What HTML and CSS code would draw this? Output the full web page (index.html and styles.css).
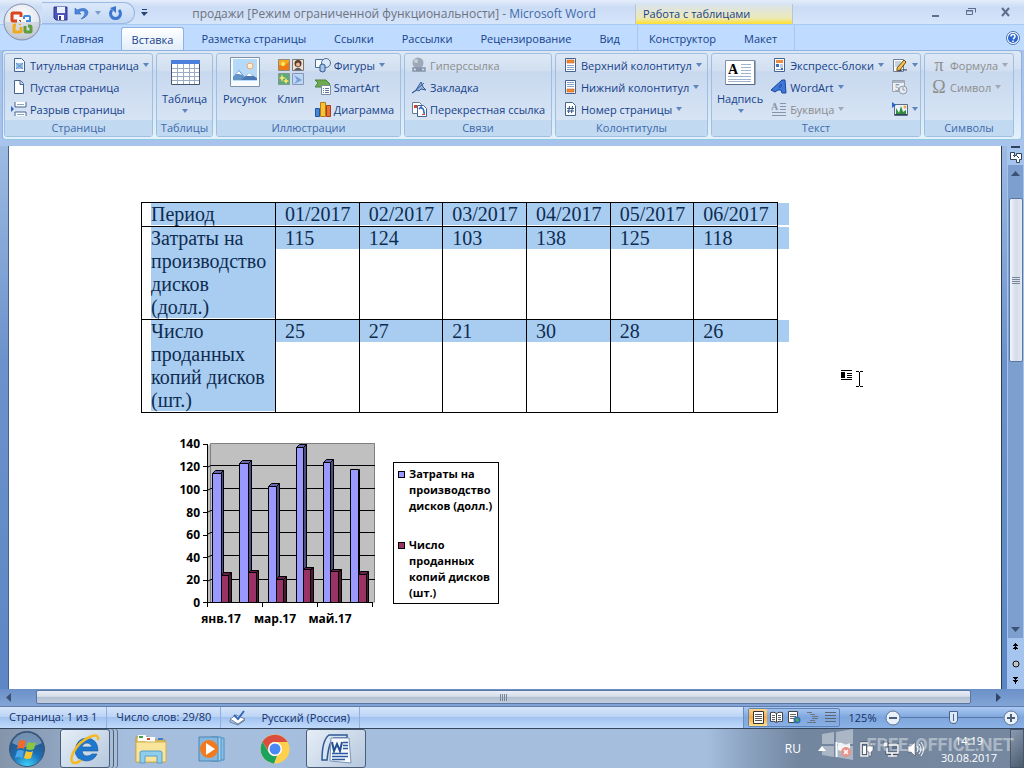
FILE: index.html
```html
<!DOCTYPE html>
<html lang="ru">
<head>
    <meta charset="UTF-8">
    <meta name="viewport" content="width=device-width, initial-scale=1.0">
    <title>продажи - Microsoft Word</title>
    <link rel="stylesheet" href="styles.css">
</head>
<body>
    <header class="titlebar">
        <button class="office" aria-label="Office">
            <svg width="38" height="38" viewBox="0 0 38 38">
                <defs>
                    <radialGradient id="orb" cx=".5" cy=".35" r=".65">
                        <stop offset="0" stop-color="#fff"/>
                        <stop offset=".7" stop-color="#e3e8f0"/>
                        <stop offset="1" stop-color="#b4bccb"/>
                    </radialGradient>
                </defs>
                <circle cx="19" cy="19" r="18" fill="url(#orb)" stroke="#7f8fa8"/>
                <path d="M2 19a17 17 0 0 0 34 0z" fill="#c3cad6" opacity=".6"/>
                <g fill="none">
                    <path d="M14 18H10q-1 0-1-1v-6q0-1 1-1h7q1 0 1 1v3" stroke="#d8471c" stroke-width="3"/>
                    <path d="M17 18v-1M18 18h-1" stroke="#d8471c" stroke-width="2"/>
                    <path d="M21 16v-2q0-1 1-1h4q1 0 1 1v4h-4" stroke="#3b8de0" stroke-width="2"/>
                    <path d="M13 22h-1q-1 0-1 1v5q0 1 1 1h5q1 0 1-1v-4" stroke="#f2a91c" stroke-width="3"/>
                    <path d="M17 22v-1" stroke="#f2a91c" stroke-width="2"/>
                    <path d="M22 23v5q0 1 1 1h4q1 0 1-1v-4q0-1-1-1h-2" stroke="#5f9c3c" stroke-width="3"/>
                </g>
            </svg>
        </button>
        <div class="quick">
            <button aria-label="Сохранить"><svg width="15" height="15" viewBox="0 0 15 15"><path d="M1 1h13v13H3l-2-2z" fill="#4f55b8" stroke="#31378e"/><path d="M4 1h8v6H4z" fill="#e8f0fb"/><path d="M5 9h6v5H5z" fill="#fff"/><path d="M6 10h2v4H6z" fill="#31378e"/></svg></button>
            <button aria-label="Отменить"><svg width="15" height="15" viewBox="0 0 15 15"><path d="M1 2v6h6l-2-2q5-3 6 1 0 3-4 6 7-2 7-7-2-6-11-2z" fill="#4a86dd" stroke="#2f62b5" stroke-width=".6"/></svg></button>
            <button aria-label="Список отмены"><svg width="7" height="4"><path d="M0 0h6L3 4z" fill="#7a9ccb"/></svg></button>
            <button aria-label="Повторить"><svg width="15" height="15" viewBox="0 0 15 15"><path d="M4 4a5 5 0 1 0 7 0" fill="none" stroke="#3d76d0" stroke-width="3"/><path d="M8 0v7L2 2z" fill="#3d76d0"/></svg></button>
        </div>
        <button class="quick-more" aria-label="Настройка панели"><svg width="7" height="7"><path d="M1 0h5v1H1zM0 3h7L3 7z" fill="#24427a"/></svg></button>
        <h1>продажи [Режим ограниченной функциональности] - <span>Microsoft Word</span></h1>
        <div class="context">Работа с таблицами</div>
        <div class="window">
            <button aria-label="Свернуть"><svg width="12" height="12"><path d="M2 9h7v2H2z" fill="#5d6f8e"/></svg></button>
            <button aria-label="Восстановить"><svg width="12" height="12"><path d="M3.500 2.500h7v4M1.500 5h6v3.500h-6z" fill="none" stroke="#5d6f8e"/><path d="M1 4h7v1H1zM3 2h8v1H3z" fill="#5d6f8e"/></svg></button>
            <button aria-label="Закрыть"><svg width="12" height="12"><path d="M2 2l7 8M9 2l-7 8" stroke="#5d6f8e" stroke-width="2"/></svg></button>
        </div>
    </header>

    <nav class="tabs">
        <a href="#">Главная</a>
        <a href="#" class="active">Вставка</a>
        <a href="#">Разметка страницы</a>
        <a href="#">Ссылки</a>
        <a href="#">Рассылки</a>
        <a href="#">Рецензирование</a>
        <a href="#">Вид</a>
        <span class="context-tabs">
            <a href="#">Конструктор</a>
            <a href="#">Макет</a>
        </span>
        <button class="help" aria-label="Справка"><svg width="14" height="14" viewBox="0 0 14 14"><circle cx="7" cy="7" r="6.500" fill="#fff" stroke="#4a6fae"/><circle cx="7" cy="7" r="5" fill="#2b67d0"/><path d="M5 5.500q0-2 2-2t2 2q0 1-2 2.500M7 9.500v1.500" stroke="#fff" stroke-width="1.600" fill="none"/></svg></button>
    </nav>

    <div class="ribbon">
        <section class="group pages">
            <div class="tools">
                <div class="stack">
                    <button><svg class="icon" viewBox="0 0 16 16"><path d="M3.500 1.500h7l3 3v10h-10z" fill="#f4f8fd" stroke="#42648f"/><path d="M5 6h7v6H5z" fill="#9cbfe6"/><path d="M5 6l7 6M12 6l-7 6" stroke="#5d8fc8"/></svg>Титульная страница<i class="arrow"></i></button>
                    <button><svg class="icon" viewBox="0 0 16 16"><path d="M3.500 1.500h6l3 3v10h-9z" fill="#fff" stroke="#42648f"/><path d="M9 1.500v4h4" fill="#c6d6ea" stroke="#42648f"/></svg>Пустая страница</button>
                    <button><svg class="icon" viewBox="0 0 16 16"><path d="M4 1v5h11V1M4 15v-4h11v4" fill="#fff" stroke="#42648f"/><path d="M6 3.500h7M6 13.500h7" stroke="#8aa5c6"/><path d="M0 5l3 3-3 3z" fill="#2a65c8"/></svg>Разрыв страницы</button>
                </div>
            </div>
            <h2>Страницы</h2>
        </section>

        <section class="group tables">
            <div class="tools">
                <button class="big"><svg width="32" height="32" viewBox="0 0 32 32"><path d="M2.500 4.500h28v24h-28z" fill="#fff" stroke="#45546d"/><path d="M2 4h29v4H2z" fill="#4a80dc"/><path d="M3 12.500h27M3 16.500h27M3 20.500h27M3 24.500h27M8.500 8v20M14.500 8v20M20.500 8v20M25.500 8v20" stroke="#9aabc4"/></svg>Таблица<i class="arrow"></i></button>
            </div>
            <h2>Таблицы</h2>
        </section>

        <section class="group pics">
            <div class="tools">
                <button class="big"><svg width="32" height="32" viewBox="0 0 32 32"><path d="M1.500 1.500h29v29h-29z" fill="#f8fbfd" stroke="#7d92a8"/><path d="M4 3h24v22H4z" fill="#b5d9f8"/><circle cx="21" cy="10" r="3" fill="#fff0d8" stroke="#f0a468"/><path d="M4 24v-3l6-7 5 6 3 4z" fill="#6293c6"/><path d="M12 24l8-7 8 5v2z" fill="#4978b4"/><path d="M7 18l3-3 3 4-3-1zM17 20l3-3 4 3z" fill="#fff"/></svg>Рисунок</button>
                <button class="big"><svg width="32" height="32" viewBox="0 0 32 32"><path d="M3.500 3.500h11v11h-11z" fill="#f9a91e" stroke="#8c8a82"/><path d="M4 9l5 1 5-4v8H4z" fill="#ee7a12"/><circle cx="8" cy="8" r="2" fill="#ffe96c"/><path d="M17.500 3.500h11v11h-11z" fill="#eee2d4" stroke="#777"/><circle cx="23" cy="7.500" r="3.500" fill="#563b2d"/><circle cx="23" cy="8.500" r="2" fill="#efb58d"/><path d="M19 14q4-5 8 0z" fill="#5d5d65"/><path d="M3.500 17.500h11v11h-11z" fill="#5eaa7c" stroke="#7d9c88"/><path d="M7 18l1 3 3 1-3 1-1 3-1-3-2-1 2-1zM11 22l1 2 2 1-2 1-1 2-1-2-2-1 2-1z" fill="#fbe568"/><path d="M17.500 17.500h11v11h-11z" fill="#bcd6f4" stroke="#8798b4"/><path d="M19 19l8 5-8 4 3-4z" fill="#769edb"/></svg>Клип</button>
                <div class="stack">
                    <button><svg class="icon" viewBox="0 0 16 16"><path d="M.500 2.500h8v8h-8z" fill="#f7fafe" stroke="#4b6d9c"/><circle cx="11" cy="6" r="4.500" fill="#dce9f8" stroke="#4b6d9c"/><path d="M5 8v6q3 2 5 0V8q-2-2-5 0z" fill="#a5c5eb" stroke="#355b90"/></svg>Фигуры<i class="arrow"></i></button>
                    <button><svg class="icon" viewBox="0 0 16 16"><path d="M0 1h11l4 4-3 3H0l3-4z" fill="#6eaa4e" stroke="#4b8538"/><path d="M6.500 6.500h9v9h-9z" fill="#fff" stroke="#7b8ca2"/><path d="M8 9.500h1M10 9.500h4M8 11.500h1M10 11.500h4M8 13.500h1M10 13.500h4" stroke="#5e789c"/></svg>SmartArt</button>
                    <button><svg class="icon" viewBox="0 0 16 16"><path d="M.500 7.500h4v8h-4z" fill="#4587d9" stroke="#1f569c"/><path d="M5.500 1.500h5v14h-5z" fill="#f9c433" stroke="#b8791a"/><path d="M11.500 4.500h4v11h-4z" fill="#e97332" stroke="#a5401d"/></svg>Диаграмма</button>
                </div>
            </div>
            <h2>Иллюстрации</h2>
        </section>

        <section class="group links">
            <div class="tools">
                <div class="stack">
                    <button disabled><svg class="icon" viewBox="0 0 16 16"><circle cx="7" cy="6" r="5.500" fill="#9da8b8"/><circle cx="5" cy="4" r="2" fill="#c7d0db"/><path d="M2 11h5v3H2zM8 11h6v3H8zM5 12.500h6" fill="none" stroke="#8793a6" stroke-width="1.500"/></svg>Гиперссылка</button>
                    <button><svg class="icon" viewBox="0 0 16 16"><path d="M1 14l4-3 5-8 2 5 3 3-5-1-2 2-2-1z" fill="#9bb6df" stroke="#365b98"/><path d="M5 11L13 4" stroke="#365b98"/></svg>Закладка</button>
                    <button><svg class="icon" viewBox="0 0 16 16"><path d="M1.500 1.500h7l2 2v9h-9z" fill="#fff" stroke="#6a7890"/><path d="M3 4h3v3H3z" fill="#d8452c"/><path d="M6.500 4.500h6l3 3v8h-9z" fill="#fff" stroke="#42648f"/><path d="M8 8l2-2v1q3 0 3 5h1" fill="none" stroke="#2d62bd" stroke-width="1.500"/><path d="M11 13h3v1h-3z" fill="#d8452c"/></svg>Перекрестная ссылка</button>
                </div>
            </div>
            <h2>Связи</h2>
        </section>

        <section class="group heads">
            <div class="tools">
                <div class="stack">
                    <button><svg class="icon" viewBox="0 0 16 16"><path d="M3.500 1.500h10v13h-10z" fill="#fff" stroke="#42648f"/><path d="M5 3h7v3H5z" fill="#f08a3c" stroke="#c25c18" stroke-width=".6"/><path d="M5 8.500h7M5 10.500h7M5 12.500h7" stroke="#88a4cb"/></svg>Верхний колонтитул<i class="arrow"></i></button>
                    <button><svg class="icon" viewBox="0 0 16 16"><path d="M3.500 1.500h10v13h-10z" fill="#fff" stroke="#42648f"/><path d="M5 10h7v3H5z" fill="#f08a3c" stroke="#c25c18" stroke-width=".6"/><path d="M5 3.500h7M5 5.500h7M5 7.500h7" stroke="#88a4cb"/></svg>Нижний колонтитул<i class="arrow"></i></button>
                    <button><svg class="icon" viewBox="0 0 16 16"><path d="M3.500 1.500h7l3 3v10h-10z" fill="#fff" stroke="#42648f"/><path d="M7.500 5l-1 7M10.500 5l-1 7M5 7.500h7M5 10h7" stroke="#32527f"/></svg>Номер страницы<i class="arrow"></i></button>
                </div>
            </div>
            <h2>Колонтитулы</h2>
        </section>

        <section class="group text">
            <div class="tools">
                <button class="big"><svg width="32" height="32" viewBox="0 0 32 32"><path d="M1.500 4.500h29v24h-29z" fill="#fff" stroke="#8292a8"/><path d="M2 28.500h29v-24" fill="none" stroke="#596b84"/><text x="4" y="18" class="letter">A</text><path d="M17 8.500h10M17 11.500h10M17 14.500h10M17 17.500h10M4 20.500h23M4 23.500h23M4 25.500h23" stroke="#9db5d3"/></svg>Надпись<i class="arrow"></i></button>
                <div class="stack">
                    <button><svg class="icon" viewBox="0 0 16 16"><path d="M3.500 1.500h10v13h-10z" fill="#fff" stroke="#42648f"/><path d="M5 3h7v3H5z" fill="#f08a3c"/><path d="M5 7h3v3H5z" fill="#3a70c0"/><path d="M9 8h3M9 10h3M5 12.500h5" stroke="#7c99c2"/><path d="M10 11h2v2h-2z" fill="#3a70c0"/></svg>Экспресс-блоки<i class="arrow"></i></button>
                    <button><svg class="icon" viewBox="0 0 16 16"><path d="M0 11L11 1h3l1 13h-4l-1-3H7l-3 2zM8 8h2V5z" fill="#3d78da" fill-rule="evenodd" stroke="#1c479c"/></svg>WordArt<i class="arrow"></i></button>
                    <button disabled><svg class="icon" viewBox="0 0 16 16"><text x="0" y="9" class="dropcap">A</text><path d="M9 2.500h6M9 5.500h6M9 8.500h6M1 11.500h14M1 14.500h14" stroke="#8994a6"/></svg>Буквица<i class="arrow"></i></button>
                </div>
                <div class="stack">
                    <button aria-label="Строка подписи"><svg class="icon" viewBox="0 0 16 16"><path d="M1.500 2.500h10v12h-10z" fill="#fff" stroke="#6f7f96"/><path d="M3 5h6M3 7h6M3 9h4" stroke="#8fa6c4"/><path d="M5 11l7-8 2 2-6 8-3 1z" fill="#f4c248" stroke="#6c4a1a"/><path d="M7 14q3-2 8-1" stroke="#253e66" fill="none"/></svg><i class="arrow"></i></button>
                    <button disabled aria-label="Дата и время"><svg class="icon" viewBox="0 0 16 16"><path d="M.500 1.500h12v11H.5z" fill="#edf0f4" stroke="#9aa5b5"/><path d="M1 2h11v2H1z" fill="#aab4c2"/><text x="3" y="12" class="day">5</text><circle cx="11" cy="11" r="4" fill="#e6eaf0" stroke="#8f9bad"/><path d="M11 8v3h2" stroke="#8f9bad" fill="none"/></svg></button>
                    <button aria-label="Объект"><svg class="icon" viewBox="0 0 16 16"><path d="M2.500 3.500h13v11h-13z" fill="#eaf1f8" stroke="#5a6b86"/><path d="M0 1l4 3-4 3z" fill="#2a65c8"/><path d="M4 7l3 5 2-7 2 6 3-2v5H4z" fill="#2f8c3c"/><circle cx="13" cy="6" r="1.500" fill="#f0a63c"/><path d="M3 13h12v1H3z" fill="#31415b"/></svg><i class="arrow"></i></button>
                </div>
            </div>
            <h2>Текст</h2>
        </section>

        <section class="group symbols">
            <div class="tools">
                <div class="stack">
                    <button disabled><span class="icon glyph">π</span>Формула<i class="arrow"></i></button>
                    <button disabled><span class="icon glyph">Ω</span>Символ<i class="arrow"></i></button>
                </div>
            </div>
            <h2>Символы</h2>
        </section>
    </div>

    <main class="workspace">
        <article class="sheet">
            <table>
                <tr>
                    <th scope="row"><p>Период</p></th>
                    <td><p>01/2017</p></td>
                    <td><p>02/2017</p></td>
                    <td><p>03/2017</p></td>
                    <td><p>04/2017</p></td>
                    <td><p>05/2017</p></td>
                    <td><p>06/2017</p></td>
                </tr>
                <tr>
                    <th scope="row"><p>Затраты на производство дисков (долл.)</p></th>
                    <td><p>115</p></td>
                    <td><p>124</p></td>
                    <td><p>103</p></td>
                    <td><p>138</p></td>
                    <td><p>125</p></td>
                    <td><p>118</p></td>
                </tr>
                <tr>
                    <th scope="row"><p>Число проданных копий дисков (шт.)</p></th>
                    <td><p>25</p></td>
                    <td><p>27</p></td>
                    <td><p>21</p></td>
                    <td><p>30</p></td>
                    <td><p>28</p></td>
                    <td><p>26</p></td>
                </tr>
            </table>

            <div class="chart">
                <svg width="215" height="200" viewBox="170 430 215 200">
                    <path d="M208 446l3-3h164v160H208z" fill="#c0c0c0"/>
                    <path d="M210.500 602v-158.500h164v158.500" fill="none" stroke="#808080"/>
                    <path d="M208 467l3-1.500h164M208 490l3-1.500h164M208 512l3-1.500h164M208 534l3-1.500h164M208 557l3-1.500h164M208 581l3-1.500h164" fill="none" stroke="#000"/>
                    <g stroke="#000">
                        <g fill="#4d4d80">
                            <path d="M220.500 473.500l3-3v132h-3zM248.500 463.500l3-3v142h-3zM276.500 486.500l3-3v119h-3zM303.500 447.500l3-3v158h-3zM330.500 462.500l3-3v143h-3zM358.500 470.500l1-1v133h-1z"/>
                        </g>
                        <g fill="#6666b3">
                            <path d="M212.500 473.500l3-3h8l-3 3zM239.500 463.500l3-3h9l-3 3zM268.500 486.500l3-3h8l-3 3zM296.500 447.500l3-3h7l-3 3zM323.500 462.500l3-3h7l-3 3z"/>
                        </g>
                        <path d="M212.500 602.500v-129h9v129zM239.500 602.500v-139h9v139zM268.500 602.500v-116h8v116zM296.500 602.500v-155h7v155zM323.500 602.500v-140h7v140zM350.500 602.500v-133h8v133z" fill="#9999ff"/>
                        <path d="M228.500 575.500l3-3v30h-3zM256.500 572.500l2-2v32h-2zM283.500 579.500l3-3v26h-3zM310.500 569.500l3-2v35h-3zM338.500 571.500l3-2v33h-3zM366.500 574.500l2-3v31h-2z" fill="#4d1a33"/>
                        <path d="M221.500 575.500l2-3h8l-3 3zM248.500 572.500l2-2h8l-2 2zM276.500 579.500l2-3h8l-3 3zM303.500 569.500l2-2h8l-3 2zM330.500 571.500l2-2h9l-3 2zM358.500 574.500l2-3h8l-2 3z" fill="#66224c"/>
                        <path d="M221.500 602.500v-27h7v27zM248.500 602.500v-30h8v30zM276.500 602.500v-23h7v23zM303.500 602.500v-33h7v33zM330.500 602.500v-31h8v31zM358.500 602.500v-28h8v28z" fill="#993366"/>
                    </g>
                    <path d="M207.500 444v159M203 444.500h4M203 466.500h4M203 490.500h4M203 512.500h4M203 535.500h4M203 557.500h4M203 580.500h4M203 602.500h170M207.500 603v4M262.500 603v4M317.500 603v4M372.500 603v4" fill="none" stroke="#000"/>
                    <g class="axis-y">
                        <text x="200" y="448">140</text>
                        <text x="200" y="471">120</text>
                        <text x="200" y="494">100</text>
                        <text x="200" y="517">80</text>
                        <text x="200" y="539">60</text>
                        <text x="200" y="562">40</text>
                        <text x="200" y="584">20</text>
                        <text x="200" y="607">0</text>
                    </g>
                    <g class="axis-x">
                        <text x="221" y="623">янв.17</text>
                        <text x="275" y="623">мар.17</text>
                        <text x="330" y="623">май.17</text>
                    </g>
                </svg>
                <ul class="legend">
                    <li class="costs">Затраты на производство дисков (долл.)</li>
                    <li class="sold">Число проданных копий дисков (шт.)</li>
                </ul>
            </div>

            <svg class="cursor" width="24" height="18" viewBox="0 0 24 18"><path d="M1 .5h11M7 3.500h5M7 5.500h5M7 7.500h5M1 9.500h11M16 1.500h3M20 1.500h3M16 16.500h3M20 16.500h3M19.500 2v14" stroke="#000"/><path d="M1 2h4v6H1z"/></svg>
        </article>

        <div class="vscroll">
            <button class="split" aria-label="Разделить"></button>
            <button class="ruler" aria-label="Линейка"><svg width="12" height="12" viewBox="0 0 12 12"><path d="M.500 1.500h4v3h2v-2h5v6h-2v3h-3v-3h-6z" fill="#fff" stroke="#33425c"/><path d="M3 4l2 2M7 5l2 2" stroke="#33425c"/></svg></button>
            <div class="track">
                <button aria-label="Вверх"><svg width="9" height="5"><path d="M0 5h9L4.500 0z" fill="#3c5273"/></svg></button>
                <div class="thumb"></div>
                <button aria-label="Вниз"><svg width="9" height="5"><path d="M0 0h9L4.500 5z" fill="#3c5273"/></svg></button>
            </div>
            <button class="jump" aria-label="Предыдущая"><svg width="5" height="7"><path d="M2 0h1v1h1v1h1v1H3v1h1v1h1v1H3v1H2V6H0V5h1V4h1V3H0V2h1V1h1z"/></svg></button>
            <button class="jump" aria-label="Объект перехода"><svg width="8" height="8"><circle cx="4" cy="4" r="3" fill="#c5c5c5" stroke="#111"/></svg></button>
            <button class="jump" aria-label="Следующая"><svg width="5" height="7"><path d="M0 0h5v1H4v1H3v1h2v1H4v1H3v2H2V5H1V4H0V3h2V2H1V1H0z"/></svg></button>
        </div>
    </main>

    <div class="hscroll">
        <button aria-label="Влево"><svg width="5" height="9"><path d="M5 0v9L0 4.500z" fill="#3c5273"/></svg></button>
        <div class="thumb"></div>
        <button aria-label="Вправо"><svg width="5" height="9"><path d="M0 0v9l5-4.500z" fill="#2f4468"/></svg></button>
    </div>

    <footer class="status">
        <span>Страница: 1 из 1</span>
        <span>Число слов: 29/80</span>
        <span class="lang"><svg width="17" height="16" viewBox="0 0 17 16"><path d="M1 9l6-4 9 4-7 5z" fill="#fff" stroke="#6c7f9c"/><path d="M1 10v2l8 3 7-5" fill="none" stroke="#6c7f9c"/><path d="M5 5l4 4 6-8" fill="none" stroke="#3267bf" stroke-width="2"/></svg>Русский (Россия)</span>
        <div class="tray-right">
            <div class="views">
                <button class="on" aria-label="Разметка"><svg width="13" height="13"><path d="M1.500.5h10v12h-10z" fill="#fff" stroke="#333"/><path d="M3 3.500h7M3 5.500h7M3 7.500h7M3 9.500h7" stroke="#555"/></svg></button>
                <button aria-label="Чтение"><svg width="13" height="13"><path d="M.500 1.500q4-1 6 1 2-2 6-1v9q-4-1-6 1-2-2-6-1zM6.500 2v9" fill="#fff" stroke="#444"/><path d="M2 4.500h3M2 6.500h3M2 8.500h3M8 4.500h3M8 6.500h3M8 8.500h3" stroke="#666"/></svg></button>
                <button aria-label="Веб"><svg width="13" height="13"><path d="M.500.5h9v11h-9z" fill="#fff" stroke="#444"/><path d="M2 3.500h6M2 5.500h6M2 7.500h4" stroke="#666"/><circle cx="9" cy="9" r="3.500" fill="#2e6fb7"/><path d="M7 8l3-1 1 3-2 1z" fill="#55a548"/></svg></button>
                <button aria-label="Структура"><svg width="13" height="13"><path d="M1 1.500h5M4 3.500h5M6 5.500h6M6 7.500h6M4 9.500h5M1 11.500h9" stroke="#6b7480"/></svg></button>
                <button aria-label="Черновик"><svg width="13" height="13"><path d="M1 1.500h11M1 4.500h11M1 7.500h11M1 10.500h11" stroke="#5d6671"/></svg></button>
            </div>
            <span class="percent">125%</span>
            <button class="round" aria-label="Мельче"><svg width="16" height="16"><circle cx="8" cy="8" r="7" fill="#e8f0fa" stroke="#5c7596"/><path d="M4 7h8v2H4z" fill="#4b5f7d"/></svg></button>
            <input type="range" min="0" max="100" value="52" aria-label="Масштаб">
            <button class="round" aria-label="Крупнее"><svg width="16" height="16"><circle cx="8" cy="8" r="7" fill="#e8f0fa" stroke="#5c7596"/><path d="M4 7h3V4h2v3h3v2H9v3H7V9H4z" fill="#4b5f7d"/></svg></button>
        </div>
    </footer>

    <div class="taskbar">
        <button class="start" aria-label="Пуск"><svg width="38" height="38" viewBox="0 0 38 38">
            <defs>
                <radialGradient id="startbg" cx=".5" cy="1" r=".9">
                    <stop offset="0" stop-color="#3fd7ff"/>
                    <stop offset=".5" stop-color="#1c6fb4"/>
                    <stop offset="1" stop-color="#2c4f7c"/>
                </radialGradient>
            </defs>
            <circle cx="19" cy="19" r="17.500" fill="url(#startbg)" stroke="#3c5676"/>
            <path d="M4 13a16 16 0 0 1 30 0q-15 8-30 0z" fill="#b9cde2" opacity=".5"/>
            <path d="M11 11q4-2 7 0l-2 8q-3-2-7 0z" fill="#ee6a2e"/>
            <path d="M20 12q4 2 8 0l-2 7q-4 2-8 0z" fill="#8cc63e"/>
            <path d="M9 21q3-2 7 0l-2 7q-3-2-7 0z" fill="#4aa6e8"/>
            <path d="M18 21q4 2 7 0l-2 7q-4 2-7 0z" fill="#fbc52d"/>
        </svg></button>
        <button class="app open stacked" aria-label="Internet Explorer"><svg width="32" height="32" viewBox="0 0 32 32"><path d="M29 18H13q1 5 5 5 3 0 5-2h5q-3 7-11 7Q6 27 6 17 8 5 18 5q11 1 11 13zM13 14h10q-1-4-5-4-4 0-5 4z" fill="#1f78d0" fill-rule="evenodd" stroke="#155499" stroke-width=".6"/><path d="M29 7q1-6-6-4Q10 8 4 20q-4 10 2 10 3 0 6-3" fill="none" stroke="#f5b921" stroke-width="2.500"/></svg></button>
        <button class="app" aria-label="Проводник"><svg width="34" height="32" viewBox="0 0 34 32"><path d="M2 4h12l2 3h15v22H2z" fill="#e8c968" stroke="#b99a46"/><path d="M4 2h8v6H4zM12 4h9v6h-9z" fill="#fff"/><path d="M5 3h4v2H5z" fill="#3ba04b"/><path d="M13 5h3v2h-3z" fill="#d8412f"/><path d="M24 5h5v2h-5z" fill="#3f7fcc"/><path d="M2 9h30v20H2z" fill="#f8e59b" stroke="#cfae55"/><path d="M6 30V20q0-2 2-2h18q2 0 2 2v10h-5v-7H11v7z" fill="#90cdec" stroke="#5a9cc6"/></svg></button>
        <button class="app" aria-label="Проигрыватель"><svg width="30" height="30" viewBox="0 0 30 30"><path d="M16 4h10v22H16z" fill="#8cc0e4" stroke="#4b90c2"/><path d="M13 3h10v24H13z" fill="#a8d2ee" stroke="#4b90c2"/><path d="M1 3h19v24H1z" fill="#86b6dc" stroke="#4b86b6"/><circle cx="11" cy="15" r="9" fill="#f27a1c"/><path d="M8 9l9 6-9 6z" fill="#fff"/></svg></button>
        <button class="app" aria-label="Chrome"><svg width="30" height="30" viewBox="0 0 30 30"><circle cx="15" cy="15" r="14.500" fill="#ffd04b"/><path d="M2.500 7.800A14.500 14.500 0 0 1 27.600 8H15a7 7 0 0 0-6 3.500l-.2 6z" fill="#db4d3f"/><path d="M2.500 7.800l6.500 11a7 7 0 0 0 8 3l-3 7.600A14.500 14.500 0 0 1 2.500 7.800z" fill="#1aa25f"/><circle cx="15" cy="15" r="7" fill="#fff"/><circle cx="15" cy="15" r="5.500" fill="#4a88f4"/></svg></button>
        <button class="app open" aria-label="Word"><svg width="32" height="32" viewBox="0 0 32 32"><path d="M9 2h18v3H14Q9 8 7 27H2Q2 7 9 2z" fill="#d7e4f4" stroke="#2c5793" stroke-width="1.500"/><path d="M11 5h18l2 25-21-2z" fill="#f6f9fd" stroke="#7b94b5"/><path d="M12 9l2 9 3-7 3 7 2-9" fill="none" stroke="#234f94" stroke-width="2"/><path d="M23 9.500h5M23 12.500h5M23 15.500h5M12 20.500h16M12 23.500h16M12 26.500h13" stroke="#2b58a0" stroke-width="1.500"/></svg></button>

        <div class="tray">
            <span class="input-lang">RU</span>
            <svg width="8" height="5"><path d="M0 5h8L4 0z" fill="#fff"/></svg>
            <svg width="16" height="16" viewBox="0 0 16 16"><path d="M1.500 1v15" stroke="#fff" stroke-width="2"/><path d="M3 2q3-1 6 1 3 1 6-1v8q-6 2-12-1z" fill="#eef2f6"/><circle cx="11" cy="11" r="5" fill="#dd4a3a"/><path d="M9 9l4 4M13 9l-4 4" stroke="#fff" stroke-width="1.500"/></svg>
            <svg width="14" height="16" viewBox="0 0 14 16"><path d="M1 2h7v13H1z" fill="none" stroke="#3c4859" stroke-width="3"/><path d="M1 2h7v13H1z" fill="none" stroke="#fff" stroke-width="1.500"/><path d="M3 5h3v8H3z" fill="#fff"/><path d="M7 5h6v4q-1 2-2 2v4H9v-4q-2 0-2-2zM8 2h1v3H8zM11 2h1v3h-1z" fill="#fff" stroke="#3c4859" stroke-width=".5"/></svg>
            <svg width="16" height="16" viewBox="0 0 16 16"><path d="M4 4h11v8H4zM9 12v3M5 15h9" fill="#4e6078" stroke="#3c4859" stroke-width="3"/><path d="M4 4h11v8H4zM9 12v3M5 15h9" fill="#5f7188" stroke="#fff" stroke-width="1.500"/><path d="M0 1h5v5H0z" fill="#e8edf3" stroke="#445"/></svg>
            <svg width="16" height="16" viewBox="0 0 16 16"><path d="M0 5h3l4-4v14l-4-4H0z" fill="#fff" stroke="#445" stroke-width=".5"/><path d="M9 5q2 3 0 6M11 3q4 5 0 10M13 1q5 7 0 14" fill="none" stroke="#fff"/></svg>
            <time>14:19<br>30.08.2017</time>
            <button class="desktop" aria-label="Рабочий стол"></button>
        </div>
        <div class="stamp"><svg width="31" height="31" viewBox="0 0 31 31"><path d="M0 5l12-2v12H0zM14 3l17-3v15H14zM0 17h12v11L0 26zM14 17h17v14l-17-3z" fill="#fff"/></svg>FREE-OFFICE.NET</div>
    </div>
</body>
</html>
```

FILE: styles.css
```css
* {
    box-sizing: border-box;
}
body {
    display: flex;
    flex-direction: column;
    height: 100vh;
    margin: 0;
    overflow: hidden;
    font-family: "Open Sans", "Noto Sans", sans-serif;
    font-size: 11px;
    color: #15428b;
    background: #a8c3ec;
}
button {
    display: flex;
    align-items: center;
    border: 0;
    padding: 0;
    background: none;
    font: inherit;
    color: inherit;
}
h1, h2, p, ul {
    margin: 0;
    padding: 0;
    font-size: inherit;
    font-weight: normal;
}
a {
    color: inherit;
    text-decoration: none;
}
svg {
    flex: none;
}

/* заголовок окна */
.titlebar {
    position: relative;
    display: flex;
    flex: none;
    height: 25px;
    background: linear-gradient(#e4edfa, #cbdcf5 30%, #d6e5fa);
    border-bottom: 1px solid #a9caf3;
}
.office {
    position: absolute;
    left: 3px;
    top: 3px;
    z-index: 2;
}
.quick {
    display: flex;
    gap: 6px;
    width: 93px;
    height: 22px;
    margin: 2px 0 0 42px;
    padding-left: 11px;
    border: 1px solid #9bb9e2;
    border-left: 0;
    border-radius: 0 11px 11px 0;
    background: linear-gradient(#dbe8fa, #c3d8f4);
}
.quick-more {
    width: 18px;
    justify-content: center;
}
.titlebar h1 {
    flex: 1;
    text-align: center;
    font-size: 12px;
    line-height: 28px;
    color: #6d737e;
    white-space: nowrap;
}
.titlebar h1 span {
    color: #3e6aaa;
}
.context {
    width: 158px;
    margin-top: 4px;
    padding-left: 7px;
    line-height: 20px;
    white-space: nowrap;
    background: linear-gradient(#d9e3ee, #ece9b8 70%, #ffe02c);
    border-left: 1px solid #b9c6cf;
    border-right: 1px solid #b9c6cf;
}
.window {
    display: flex;
    justify-content: flex-end;
    gap: 23px;
    width: 231px;
    padding-right: 12px;
}

/* вкладки */
.tabs {
    display: flex;
    flex: none;
    height: 25px;
    padding: 0 4px 0 49px;
    background: #bfdbff;
    line-height: 27px;
    white-space: nowrap;
}
.tabs a {
    padding: 0 11px;
    margin-right: 6px;
}
.tabs .active {
    margin-top: 2px;
    line-height: 23px;
    background: linear-gradient(#fff, #e2edf9);
    border: 1px solid #8db2e3;
    border-bottom: 0;
    border-radius: 3px 3px 0 0;
    padding: 0 10px;
}
.context-tabs {
    display: flex;
    width: 158px;
    border-left: 1px solid #aec6e6;
    border-right: 1px solid #aec6e6;
}
.help {
    margin-left: auto;
}

/* лента */
.ribbon {
    display: flex;
    flex: none;
    gap: 3px;
    height: 90px;
    margin: 0 2px 6px;
    padding: 2px 1px;
    border: 1px solid #8db2e3;
    border-bottom-color: #8fc7e4;
    border-radius: 4px;
    background: linear-gradient(#dee8f5, #d4e1f2 20%, #c8d8ee 22%, #e3f1fc);
}
.group {
    display: flex;
    flex-direction: column;
    border: 1px solid #9fbfe0;
    border-radius: 3px;
    background: linear-gradient(#dee8f5, #d1dff0 20%, #c8d8ee 22%, #dbe8f6);
    overflow: hidden;
}
.pages { width: 149px; }
.tables { width: 57px; }
.pics { width: 185px; }
.links { width: 148px; }
.heads { width: 153px; }
.text { width: 210px; }
.symbols { width: 90px; }
.group h2 {
    flex: none;
    height: 16px;
    line-height: 15px;
    text-align: center;
    color: #3e6aaa;
    background: #c2d9f2;
}
.tools {
    display: flex;
    flex: 1;
    min-height: 0;
    padding-left: 6px;
}
.stack button {
    height: 22px;
    gap: 3px;
    white-space: nowrap;
}
.icon {
    width: 16px;
    height: 16px;
}
.glyph {
    font: 18px/16px "Liberation Serif", serif;
    text-align: center;
}
.arrow {
    border: 3px solid transparent;
    border-top: 4px solid #5d86bf;
    border-bottom: 0;
    margin-left: 1px;
}
.stack button:disabled {
    color: #8d8d8d;
}
:disabled .arrow {
    border-top-color: #a0a8b4;
}
.big {
    flex-direction: column;
    gap: 3px;
    height: 64px;
    padding-top: 2px;
    margin-right: 8px;
}
.tables .tools,
.text .tools {
    padding-left: 5px;
}
.stack + .stack {
    margin-left: 8px;
}
.letter {
    font: bold 14px "Liberation Serif", serif;
}
.dropcap,
.day {
    font: bold 10px "Liberation Serif", serif;
    fill: #8994a6;
}

/* документ */
.workspace {
    display: flex;
    flex: 1;
    min-height: 0;
    background: linear-gradient(#9dbae2, #6c92cb 40%, #5c87c4);
}
.sheet {
    position: relative;
    flex: 1;
    margin-left: 8px;
    padding: 56px 0 0 132px;
    background: #fff;
    border-left: 1px solid #44618f;
    border-right: 1px solid #333c4a;
}
table {
    width: 637px;
    table-layout: fixed;
    border-collapse: collapse;
    font: 20px/23px "Liberation Serif", serif;
    color: #0e2c50;
}
th, td {
    height: 24px;
    padding: 0;
    border: 1px solid #000;
    vertical-align: top;
    text-align: left;
    font-weight: normal;
}
th {
    width: 134px;
    padding-left: 9px;
}
tr p {
    background: linear-gradient(#a9ccf1, #a9ccf1) no-repeat;
    background-size: 100% calc(100% - 1px);
}
th p {
    padding-right: 6px;
}
td p {
    padding-left: 9px;
}
td:last-child p {
    margin-right: -12px;
}
.chart {
    display: flex;
    margin: 17px 0 0 29px;
    font: bold 12px "Open Sans", sans-serif;
    color: #000;
}
.axis-y {
    text-anchor: end;
}
.axis-x {
    text-anchor: middle;
}
.legend {
    display: flex;
    flex-direction: column;
    justify-content: space-between;
    width: 106px;
    height: 142px;
    margin: 32px 0 0 8px;
    padding: 3px 0 2px 15px;
    border: 1px solid #000;
    font-size: 11px;
    font-weight: bold;
    line-height: 16px;
    list-style: none;
}
.legend li::before {
    content: "";
    float: left;
    width: 5px;
    height: 5px;
    margin: 5px 0 0 -11px;
    border: 1px solid #000;
    background: #9999ff;
}
.legend .sold::before {
    background: #993366;
}
.cursor {
    position: absolute;
    left: 831px;
    top: 224px;
}

/* прокрутка */
.vscroll {
    display: flex;
    flex-direction: column;
    align-items: center;
    width: 17px;
    margin-left: 5px;
    background: #a5c4ee;
}
.split {
    width: 9px;
    height: 2px;
    background: #33425c;
}
.ruler {
    height: 17px;
}
.track {
    display: flex;
    flex-direction: column;
    align-items: center;
    justify-content: space-between;
    flex: 1;
    width: 15px;
    padding: 6px 0;
    background: #7d9fd0;
}
.thumb {
    display: flex;
    align-items: center;
    justify-content: center;
    border: 1px solid #5b76a3;
    border-radius: 2px;
}
.thumb::after {
    content: "";
    width: 8px;
    height: 7px;
    background: repeating-linear-gradient(#77849a 0 1px, transparent 1px 2px);
}
.track .thumb {
    width: 14px;
    height: 164px;
    margin-bottom: auto;
    margin-top: 22px;
    background: linear-gradient(90deg, #f1f5fa, #d3dce8 50%, #e2eaf4);
}
.jump {
    height: 17px;
}
.hscroll {
    display: flex;
    flex: none;
    justify-content: space-between;
    height: 17px;
    padding: 1px 23px 2px 6px;
    background: linear-gradient(#6b90c8, #83a5d6);
}
.hscroll .thumb {
    flex: 1;
    margin: 0 25px;
    background: linear-gradient(#e8eef6, #d5dde9 45%, #b3c0d1 50%, #c2cddd);
}
.hscroll .thumb::after {
    background: repeating-linear-gradient(90deg, #77849a 0 1px, transparent 1px 2px);
}

/* строка состояния */
.status {
    display: flex;
    flex: none;
    height: 22px;
    line-height: 20px;
    color: #15306b;
    border-top: 1px solid #5d7dab;
    background: linear-gradient(#d7e6fb, #bcd4f5 45%, #a2c3f0 50%, #c0dafb);
}
.status > span {
    padding: 0 9px;
    border-right: 1px solid #8eb0df;
}
.status .lang {
    display: flex;
    align-items: center;
    gap: 15px;
    padding-left: 8px;
}
.tray-right {
    display: flex;
    align-items: center;
    margin-left: auto;
    padding: 0 5px 0 4px;
    border-left: 1px solid #6c8ebe;
    background: linear-gradient(#abc9f2, #7ea7de 50%, #8cb2e6);
}
.views {
    display: flex;
    border: 1px solid #5f83b6;
    border-radius: 2px;
}
.views button {
    width: 18px;
    height: 17px;
    justify-content: center;
}
.views .on {
    background: linear-gradient(#fbd58c, #fba93d 50%, #fde18b);
}
.percent {
    width: 45px;
    text-align: center;
}
.tray-right input {
    appearance: none;
    width: 102px;
    height: 16px;
    margin: 0;
    background: linear-gradient(#5877a5, #5877a5) center / 100% 1px no-repeat;
}
.tray-right input::-webkit-slider-thumb {
    appearance: none;
    width: 9px;
    height: 13px;
    border: 1px solid #4d6588;
    border-radius: 1px 1px 5px 5px;
    background: linear-gradient(#4d6588, #4d6588) center / 1px 7px no-repeat #dce8f7;
}

/* панель задач */
.taskbar {
    position: relative;
    display: flex;
    flex: none;
    align-items: center;
    height: 40px;
    border-top: 1px solid #34465c;
    background: linear-gradient(90deg, #8495ab, #8ea2bd 5%, #a5bedd 12%, #a5bedd 69%, #8ba3c1 73%, #73869f 78%, #75889f);
}
.start {
    margin: 0 14px 0 8px;
}
.app {
    justify-content: center;
    width: 62px;
    height: 39px;
}
.open {
    width: 60px;
    border: 1px solid #4a5d78;
    border-radius: 3px;
    background: linear-gradient(135deg, #e6eef7, #b5c8dd);
}
.stacked {
    width: 50px;
    margin-right: 10px;
    box-shadow: 3px 0 0 #a9bdd6, 4px 0 0 #4a5d78, 7px 0 0 #a9bdd6, 8px 0 0 #5f7391;
}
.tray {
    display: flex;
    align-items: center;
    gap: 9px;
    height: 39px;
    margin-left: auto;
    color: #fff;
}
.input-lang {
    margin-right: 8px;
    font-size: 12px;
}
.tray time {
    text-align: center;
    line-height: 17px;
    margin: 0 4px 0 8px;
}
.desktop {
    width: 14px;
    height: 39px;
    border: 1px solid #46566c;
    background: linear-gradient(135deg, #8b9bb0, #4c5a6e);
}
.stamp {
    position: absolute;
    right: 10px;
    top: 0;
    display: flex;
    align-items: center;
    gap: 14px;
    font: bold 18px Roboto, sans-serif;
    color: #fff;
    opacity: .4;
}
```
